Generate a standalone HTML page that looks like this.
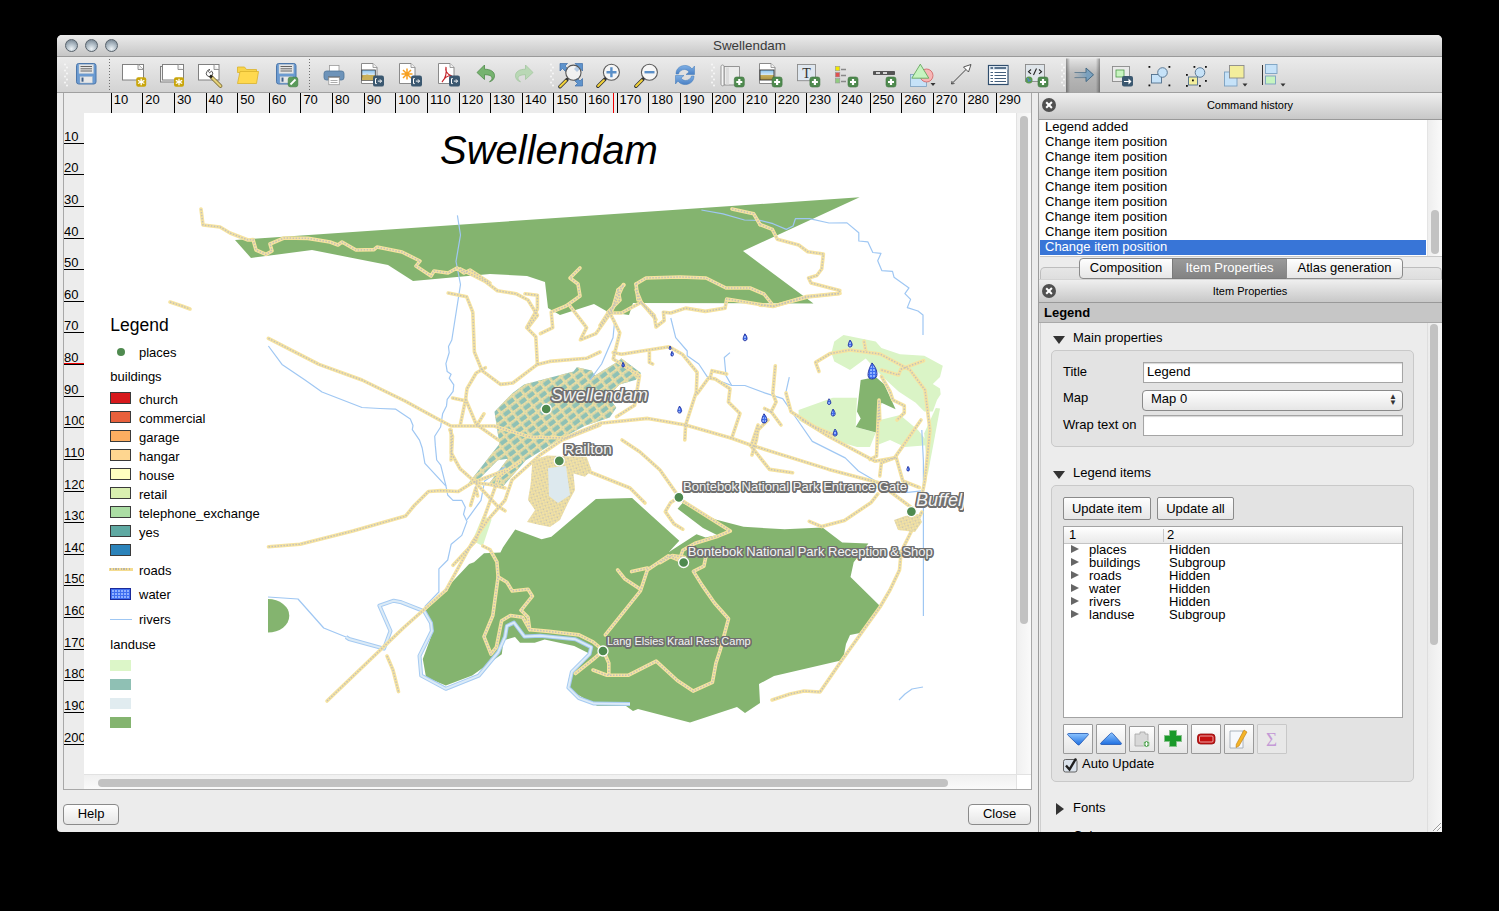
<!DOCTYPE html>
<html><head><meta charset="utf-8">
<style>
*{margin:0;padding:0;box-sizing:border-box}
html,body{width:1499px;height:911px;background:#000;overflow:hidden;font-family:"Liberation Sans",sans-serif;color:#000;position:relative}
.a{position:absolute}
#win{left:57px;top:35px;width:1385px;height:797px;background:#ececec;border-radius:5px 5px 4px 4px}
#title{left:57px;top:35px;width:1385px;height:22px;background:linear-gradient(#ebebeb,#c6c6c6);border-radius:5px 5px 0 0;border-bottom:1px solid #9a9a9a}
#title .t{left:0;width:100%;top:3px;text-align:center;font-size:13.4px;color:#3a3a3a}
.tl{width:13px;height:13px;border-radius:50%;background:radial-gradient(circle at 50% 80%,#eef3f6 0,#b9c5ce 40%,#8594a0 80%,#6c7984 100%);border:1px solid #58626b}
#tb{left:57px;top:57px;width:1385px;height:36px;background:linear-gradient(#ebebeb,#d3d3d3);border-bottom:1px solid #a0a0a0}
#cframe{left:63px;top:93px;width:969px;height:697px;border:1px solid #a8a8a8;border-top:none;background:#ececec}
#rtop{left:84px;top:93px;width:947px;height:20px;background:#ececec;overflow:hidden;font-size:13px}
.rt{position:absolute;top:0;height:21px;border-left:1px solid #000;padding-left:2px;line-height:13px}
#rleft{left:64px;top:113px;width:20px;height:661px;background:#ececec;overflow:hidden}
.rl{position:absolute;left:0;width:20px;border-bottom:1px solid #000;line-height:13px;font-size:13px;white-space:nowrap;overflow:hidden}
#page{left:84px;top:113px;width:932px;height:661px;background:#fff;overflow:hidden}
#vs{left:1016px;top:113px;width:15px;height:661px;background:linear-gradient(90deg,#f0f0f0,#fafafa);border-left:1px solid #e2e2e2}
.thumbv{left:3px;top:3px;width:8px;height:508px;border-radius:4px;background:#c2c2c2}
#hs{left:84px;top:774px;width:932px;height:15px;background:linear-gradient(#f0f0f0,#fafafa);border-top:1px solid #e2e2e2}
.thumbh{left:14px;top:4px;width:850px;height:8px;border-radius:4px;background:#c2c2c2}
#corner{left:1016px;top:774px;width:15px;height:15px;background:#fff;border-left:1px solid #e2e2e2;border-top:1px solid #e2e2e2}
#divl{left:1038px;top:93px;width:1px;height:739px;background:#9c9c9c}
.btn{background:linear-gradient(#fefefe,#e6e6e6);border:1px solid #8a8a8a;border-radius:4px;text-align:center;font-size:13px}
.dtitle{position:absolute;left:1039px;width:403px;padding-left:19px;background:linear-gradient(#efefef,#c8c8c8);border-bottom:1px solid #999;text-align:center;font-size:11px}
.close{position:absolute;width:14px;height:14px;border-radius:50%;background:#505050}
.close:before,.close:after{content:"";position:absolute;left:6px;top:3px;width:2.4px;height:8px;background:#fff;transform:rotate(45deg)}
.close:after{transform:rotate(-45deg)}
.ch{position:absolute;left:1045px;font-size:13px;height:15px;line-height:15px;white-space:nowrap}
.tri{position:absolute;width:0;height:0;border-left:6px solid transparent;border-right:6px solid transparent;border-top:8px solid #333}
.trir{position:absolute;width:0;height:0;border-top:5px solid transparent;border-bottom:5px solid transparent;border-left:8px solid #333}
.lbl{position:absolute;font-size:13px;white-space:nowrap}
.inp{position:absolute;background:#fff;border:1px solid #a5a5a5;box-shadow:inset 0 1px 1px #d5d5d5;font-size:13px;padding-left:5px;line-height:18px}
.leg{position:absolute;font-size:13px;left:55px;white-space:nowrap}
.sw{position:absolute;left:26px;width:21px;height:12px;border:1px solid #444}
.ml{position:absolute;white-space:nowrap;font-size:12px;color:#f4f4f4;text-shadow:-1.5px 0px 0 #707070,1.5px 0px 0 #707070,0px -1.5px 0 #707070,0px 1.5px 0 #707070,-1px -1px 0 #707070,1px -1px 0 #707070,-1px 1px 0 #707070,1px 1px 0 #707070,-1.5px -0.8px 0 #707070,1.5px 0.8px 0 #707070,-1.5px 0.8px 0 #707070,1.5px -0.8px 0 #707070,0.8px 1.5px 0 #707070,-0.8px 1.5px 0 #707070,0.8px -1.5px 0 #707070,-0.8px -1.5px 0 #707070}
.ib{position:absolute}

</style></head><body>
<div class="a" id="win"></div>
<div class="a" id="title"><div class="t a">Swellendam</div></div>
<div class="tl a" style="left:65px;top:39px"></div><div class="tl a" style="left:85px;top:39px"></div><div class="tl a" style="left:105px;top:39px"></div>
<div class="a" id="tb"></div>
<svg class="a" style="left:0;top:0" width="1499" height="100" viewBox="0 0 1499 100">
<defs>
<linearGradient id="gpress" x1="0" y1="0" x2="0" y2="1"><stop offset="0" stop-color="#b9b9b9"/><stop offset="1" stop-color="#a9a9a9"/></linearGradient>
<linearGradient id="gblue" x1="0" y1="0" x2="0" y2="1"><stop offset="0" stop-color="#7fb0e6"/><stop offset="1" stop-color="#4a80c4"/></linearGradient>
<linearGradient id="gland" x1="0" y1="0" x2="0" y2="1"><stop offset="0" stop-color="#86c3f0"/><stop offset="0.5" stop-color="#d8e9f5"/><stop offset="0.5" stop-color="#c8b060"/><stop offset="1" stop-color="#a89040"/></linearGradient>
<g id="badgeY"><rect x="0" y="0" width="10" height="9.5" rx="2" fill="#c9a50a"/><path d="M5,1.5v6.5M1.8,3.2l6.4,3.1M8.2,3.2l-6.4,3.1" stroke="#fff" stroke-width="1.3"/></g>
<g id="badgeG"><rect x="0" y="0" width="10" height="10" rx="2.2" fill="#4e8a4e" stroke="#3f733f" stroke-width="0.6"/><path d="M5,2v6M2,5h6" stroke="#fff" stroke-width="2.2"/></g>
<g id="badgeE"><rect x="0" y="0" width="11" height="11" rx="2.2" fill="#3b5870"/><path d="M3.8,3h-1.3v5h1.3" stroke="#fff" stroke-width="1" fill="none"/><path d="M4.8,5.5h3.6M7,3.8l1.6,1.7l-1.6,1.7" stroke="#fff" stroke-width="1" fill="none"/></g>
<g id="grip"><circle cx="0" cy="0" r="1" fill="#f7f7f7"/><circle cx="2" cy="3" r="1" fill="#f7f7f7"/><circle cx="0" cy="6" r="1" fill="#f7f7f7"/><circle cx="2" cy="9" r="1" fill="#f7f7f7"/><circle cx="0" cy="12" r="1" fill="#f7f7f7"/><circle cx="2" cy="15" r="1" fill="#f7f7f7"/><circle cx="0" cy="18" r="1" fill="#f7f7f7"/><circle cx="2" cy="21" r="1" fill="#f7f7f7"/></g>
<g id="page"><path d="M0.5,0.5h11.5l4,4v16h-15.5z" fill="#fff" stroke="#8a8a8a" stroke-width="1"/><path d="M12,0.5v4h4" fill="#f0f0f0" stroke="#8a8a8a" stroke-width="0.8"/></g>
</defs>
<use href="#grip" x="65" y="64.5"/>
<use href="#grip" x="551" y="64.5"/>
<use href="#grip" x="712" y="64.5"/>
<use href="#grip" x="1062" y="64.5"/>
<line x1="109.5" y1="59" x2="109.5" y2="90" stroke="#6e6e6e" stroke-width="1" stroke-dasharray="1 2"/>
<line x1="309.5" y1="59" x2="309.5" y2="90" stroke="#6e6e6e" stroke-width="1" stroke-dasharray="1 2"/>
<rect x="76.5" y="63.5" width="19.5" height="20.5" rx="2.2" fill="#6b9bd2" stroke="#4d77aa" stroke-width="1"/><rect x="79" y="64.5" width="14.5" height="9" fill="#e6e6e6" stroke="#b8c5d2" stroke-width="0.5"/><path d="M80.5,66.5h11.5M80.5,68.8h11.5M80.5,71h11.5" stroke="#555" stroke-width="0.9"/><rect x="80" y="76.5" width="12.5" height="6.5" fill="#e8e8e8" stroke="#9fb3c8" stroke-width="0.5"/><rect x="81.5" y="77.5" width="2" height="4.2" fill="#3f5f88"/>
<rect x="122.5" y="64.5" width="21" height="15.5" fill="#fff" stroke="#808080"/><path d="M138,64.5l5.5,5" stroke="#808080" fill="none"/><path d="M138,64.5v5h5.5" fill="#eee" stroke="#808080" stroke-width="0.8"/>
<use href="#badgeY" x="136.2" y="77.2"/>
<rect x="160.5" y="66.5" width="21" height="15.5" fill="#eee" stroke="#808080"/><rect x="162.5" y="64.5" width="21" height="15.5" fill="#fff" stroke="#808080"/><path d="M178,64.5v5h5.5" fill="#eee" stroke="#808080" stroke-width="0.8"/>
<use href="#badgeY" x="174" y="77.2"/>
<rect x="198.5" y="64.5" width="20.5" height="15.5" fill="#fff" stroke="#808080"/><path d="M214,64.5v5h5" fill="#eee" stroke="#808080" stroke-width="0.8"/>
<path d="M207,71.5 a3.2,3.2 0 1 0 4.5,-0.5 l-1.8,1.8 l-1.5,-1.5 l1.8,-1.8 a3.2,3.2 0 0 0 -3,2z" fill="#fff" stroke="#555" stroke-width="1"/>
<path d="M211.5,77l9,9" stroke="#7a6a30" stroke-width="3.8" stroke-linecap="round"/><path d="M211.5,77l9,9" stroke="#e6d27a" stroke-width="2.2" stroke-linecap="round"/><path d="M210,75.5l2,2" stroke="#222" stroke-width="2.6"/>
<path d="M237.5,67h7l2,2.5h10v3h-19z" fill="#f8d44a" stroke="#d9b22c" stroke-width="0.8"/><path d="M237.5,83.5l2.5,-12h18.5l-2,12z" fill="#ffd94e" stroke="#d9b22c" stroke-width="0.8"/>
<rect x="276.5" y="63.5" width="19.5" height="20.5" rx="2.2" fill="#6b9bd2" stroke="#4d77aa" stroke-width="1"/><rect x="279" y="64.5" width="14.5" height="9" fill="#e6e6e6" stroke="#b8c5d2" stroke-width="0.5"/><path d="M280.5,66.5h11.5M280.5,68.8h11.5M280.5,71h11.5" stroke="#555" stroke-width="0.9"/><rect x="280" y="76.5" width="12.5" height="6.5" fill="#e8e8e8" stroke="#9fb3c8" stroke-width="0.5"/><rect x="281.5" y="77.5" width="2" height="4.2" fill="#3f5f88"/>
<rect x="288.2" y="77.2" width="9.6" height="9.6" rx="2" fill="#5a9a5a" stroke="#3d7a3d" stroke-width="0.6"/><path d="M290.5,84.5l5,-5" stroke="#fff" stroke-width="1.8"/>
<rect x="329.5" y="65.5" width="9.5" height="7" fill="#fff" stroke="#999" stroke-width="0.8"/><rect x="324" y="71" width="20" height="9" rx="2.5" fill="#6d93b9" stroke="#4f7398" stroke-width="0.8"/><rect x="328" y="76.5" width="12" height="3" fill="#666"/><rect x="328.8" y="77.5" width="10.5" height="7.2" fill="#fff" stroke="#999" stroke-width="0.8"/><path d="M330.5,80.5h7M330.5,82.5h7" stroke="#888" stroke-width="0.7"/>
<use href="#page" x="361" y="63"/><rect x="361.8" y="70" width="13.5" height="10.2" fill="url(#gland)" stroke="#333" stroke-width="0.8"/><path d="M362,78 q4,-5 7,-3 t6,2 v3h-13z" fill="#c9b05a"/>
<use href="#badgeE" x="373" y="75.6"/>
<use href="#page" x="399" y="63"/><g stroke="#f7a020" stroke-width="1.5"><path d="M407,68.5v11M401.5,74h11M403,70l8,8M411,70l-8,8"/></g><circle cx="407" cy="74" r="2" fill="#f7a020"/>
<use href="#badgeE" x="411" y="75.6"/>
<use href="#page" x="438" y="63"/><path d="M446,67 c-1,3 1,8 6,9 c-4,-1 -8,2 -10,6 c3,-3 5,-8 4,-15z" fill="none" stroke="#c4242a" stroke-width="1.1"/>
<use href="#badgeE" x="449" y="75.6"/>
<path d="M477,72.5l7.5,-7.5v4.2c6,0 10,2.5 10,6.5c0,3.5 -2.5,5.5 -5,6c2,-1 2.5,-2.5 2.5,-3.5c0,-2.5 -3,-3.5 -7.5,-3.5v4.8z" fill="#76b36f" stroke="#4f8a4a" stroke-width="0.8"/>
<path d="M533,72.5l-7.5,-7.5v4.2c-6,0 -10,2.5 -10,6.5c0,3.5 2.5,5.5 5,6c-2,-1 -2.5,-2.5 -2.5,-3.5c0,-2.5 3,-3.5 7.5,-3.5v4.8z" fill="#b9d8b5" stroke="#a3c6a0" stroke-width="0.8"/>
<path d="M560,63.5h7.5l-2.5,2.5 3,3 -2.5,2.5 -3,-3 -2.5,2.5z M582.5,63.5v7.5l-2.5,-2.5 -3,3 -2.5,-2.5 3,-3 -2.5,-2.5z M582.5,86v-7.5l-2.5,2.5 -3,-3 -2.5,2.5 3,3 -2.5,2.5z" fill="#5e93cc" stroke="#3f6fa8" stroke-width="0.7"/>
<circle cx="573.4" cy="72.7" r="7.6" fill="#fff" fill-opacity="0.55" stroke="#555" stroke-width="1.1"/>
<path d="M566.9,79.7l-7,7" stroke="#333" stroke-width="3.6" stroke-linecap="round"/><path d="M565.9,80.7l-5.8,5.8" stroke="#f2d23a" stroke-width="2" stroke-linecap="round"/>
<circle cx="611.4" cy="72.2" r="8" fill="#f6f6f6" stroke="#5a5a5a" stroke-width="1.1"/><path d="M606.5,72.2h10M611.4,67.2v10" stroke="#5a8fc8" stroke-width="2.4"/>
<path d="M604.9,79.2l-7,7" stroke="#333" stroke-width="3.6" stroke-linecap="round"/><path d="M603.9,80.2l-5.8,5.8" stroke="#f2d23a" stroke-width="2" stroke-linecap="round"/>
<circle cx="649.4" cy="72.2" r="8" fill="#f6f6f6" stroke="#5a5a5a" stroke-width="1.1"/><path d="M644.5,72.2h10" stroke="#5a8fc8" stroke-width="2.4"/>
<path d="M642.9,79.2l-7,7" stroke="#333" stroke-width="3.6" stroke-linecap="round"/><path d="M641.9,80.2l-5.8,5.8" stroke="#f2d23a" stroke-width="2" stroke-linecap="round"/>
<path d="M676,74 c0,-6 5,-9 10,-8.5 c3,0.3 5,2 6,3.5 l2.5,-3 v8.5h-8.5l3,-2.5c-1,-1.5 -2.5,-2.5 -4.5,-2.5c-3,0 -5.5,2 -6,4.5z" fill="url(#gblue)" stroke="#3f78b8" stroke-width="0.5"/>
<path d="M694,76 c0,6 -5,9 -10,8.5 c-3,-0.3 -5,-2 -6,-3.5 l-2.5,3 v-8.5h8.5l-3,2.5c1,1.5 2.5,2.5 4.5,2.5c3,0 5.5,-2 6,-4.5z" fill="url(#gblue)" stroke="#3f78b8" stroke-width="0.5"/>
<path d="M724,66.5h15.5v18.5h-15.5z" fill="#ececec" stroke="#8a8a8a" stroke-width="0.9"/><path d="M721,66.5c0,-2 3,-2 3,0v18.5c0,1 -3,1.5 -3,-1z" fill="#f6f6f6" stroke="#8a8a8a" stroke-width="0.9"/><rect x="726" y="67.5" width="3" height="17" fill="#dcdcdc"/>
<use href="#badgeG" x="734.3" y="77"/>
<use href="#page" x="759" y="63"/><rect x="760" y="70" width="14" height="10" fill="url(#gland)" stroke="#333" stroke-width="0.9"/>
<use href="#badgeG" x="772.1" y="77"/>
<rect x="797.5" y="64.5" width="18" height="16.2" fill="#dfe7ef" stroke="#8a8a8a" stroke-width="0.9"/><text x="806.5" y="77.5" font-family="Liberation Serif" font-size="14" text-anchor="middle" fill="#333">T</text>
<use href="#badgeG" x="809.9" y="77"/>
<rect x="835.3" y="66.3" width="4.5" height="4.5" fill="#f2e800" stroke="#999" stroke-width="0.6"/><rect x="835.3" y="72.5" width="4.5" height="4.5" fill="#e05050" stroke="#999" stroke-width="0.6"/><rect x="835.3" y="78.5" width="4.5" height="4.5" fill="#90cc80" stroke="#999" stroke-width="0.6"/><path d="M841,69.5h5M841,75.5h5M841,81.5h5" stroke="#888" stroke-width="1.4"/>
<use href="#badgeG" x="848" y="77"/>
<rect x="873" y="71" width="22" height="4" rx="0.8" fill="#555"/><path d="M876,73h4M883,73h4" stroke="#fff" stroke-width="1.4"/>
<use href="#badgeG" x="886" y="77"/>
<rect x="910.5" y="74.5" width="16" height="12" fill="#c6e2f8" stroke="#7aa0c0" stroke-width="0.8"/><circle cx="926.5" cy="75.5" r="6.5" fill="#f7b6b6" stroke="#d06060" stroke-width="0.8"/><path d="M920.3,64.2l8.5,14h-17z" fill="#c6f4c0" stroke="#58a050" stroke-width="0.8"/><path d="M930.5,83h5l-2.5,3z" fill="#333"/>
<path d="M951.5,84l19,-19" stroke="#444" stroke-width="1"/><path d="M971,64.5l-7.5,2.5l5,5z" fill="#fff" stroke="#444" stroke-width="0.9"/><path d="M951.5,84l0.5,-3M951.5,84l3,-0.5" stroke="#444" stroke-width="0.9"/>
<rect x="988.5" y="65.5" width="19.5" height="19" fill="#fff" stroke="#2f4d6d" stroke-width="1.2"/><rect x="989" y="66" width="18.5" height="3.8" fill="#dbe5ef"/><path d="M990.5,68h2.5M994.5,68h11.5" stroke="#2f4d6d" stroke-width="1.3"/><path d="M990.5,72.5h2.5M994.5,72.5h11.5M990.5,75.5h2.5M994.5,75.5h11.5M990.5,78.5h2.5M994.5,78.5h11.5M990.5,81.5h2.5M994.5,81.5h11.5" stroke="#2f4d6d" stroke-width="0.9"/>
<rect x="1025.5" y="64.5" width="19" height="17" fill="#dfe5ea" stroke="#888" stroke-width="0.9"/><path d="M1031,69.5l-2.5,2.2l2.5,2.2M1039,69.5l2.5,2.2l-2.5,2.2M1036.5,68.5l-3,6.5" stroke="#222" stroke-width="1.1" fill="none"/><circle cx="1029" cy="80" r="3.5" fill="#5a9a50"/><path d="M1027,78.5c1,0 2,1 1.5,2.5c1,0 1.5,-1 2.5,-0.5" stroke="#4f86c0" stroke-width="1.3" fill="none"/>
<use href="#badgeG" x="1038" y="77"/>
<defs><linearGradient id="gpr2" x1="0" y1="0" x2="0" y2="1"><stop offset="0" stop-color="#e4e4e4"/><stop offset="0.45" stop-color="#b8b8b8"/><stop offset="1" stop-color="#a9a9a9"/></linearGradient><linearGradient id="gside" x1="0" y1="0" x2="1" y2="0"><stop offset="0" stop-color="#000" stop-opacity="0.35"/><stop offset="0.12" stop-color="#000" stop-opacity="0"/><stop offset="0.88" stop-color="#000" stop-opacity="0"/><stop offset="1" stop-color="#000" stop-opacity="0.35"/></linearGradient><linearGradient id="gstem" x1="0" y1="0" x2="1" y2="0"><stop offset="0" stop-color="#7aa0bd" stop-opacity="0"/><stop offset="0.7" stop-color="#7aa0bd"/></linearGradient></defs>
<rect x="1066" y="58.5" width="34" height="34" fill="url(#gpr2)"/><rect x="1066" y="58.5" width="34" height="34" fill="url(#gside)"/>
<path d="M1074.5,72.5h11.5v-4.5l7.5,6.8l-7.5,6.8v-4.5h-11.5z" fill="url(#gstem)"/><path d="M1086,72.5v-4.5l7.5,6.8l-7.5,6.8v-4.5" fill="#7aa0bd" stroke="#3f6580" stroke-width="0.9"/><path d="M1074.5,72.5h11.5M1074.5,77.6h11.5" stroke="#3f6580" stroke-width="0.8" opacity="0.8"/>
<rect x="1112.5" y="66.5" width="17" height="15" fill="#eaeaea" stroke="#8a8a8a" stroke-width="0.9"/><rect x="1116" y="70" width="8" height="7" fill="#c8f4c0" stroke="#4f9a4a" stroke-width="0.8"/><rect x="1122" y="76" width="11" height="10.5" rx="2" fill="#3b5870"/><path d="M1124,81h4.5v-2.5l3,3l-3,3v-2.5h-4.5z" fill="#fff"/>
<rect x="1151.5" y="74.5" width="10" height="8.5" fill="#c6e2f8" stroke="#506f8c" stroke-width="0.9"/><circle cx="1162.5" cy="72.5" r="4.8" fill="#c6e2f8" stroke="#506f8c" stroke-width="0.9"/>
<rect x="1148.5" y="66" width="1.8" height="1.8" fill="#111"/>
<rect x="1168.5" y="66" width="1.8" height="1.8" fill="#111"/>
<rect x="1148.5" y="84.5" width="1.8" height="1.8" fill="#111"/>
<rect x="1168.5" y="84.5" width="1.8" height="1.8" fill="#111"/>
<rect x="1188.5" y="77" width="9" height="8" fill="#f3ee9c" stroke="#506f8c" stroke-width="0.9"/><circle cx="1200" cy="72.5" r="4.8" fill="#c6e2f8" stroke="#506f8c" stroke-width="0.9"/>
<rect x="1186" y="74" width="1.8" height="1.8" fill="#111"/>
<rect x="1193.5" y="66" width="1.8" height="1.8" fill="#111"/>
<rect x="1205" y="66" width="1.8" height="1.8" fill="#111"/>
<rect x="1186" y="85" width="1.8" height="1.8" fill="#111"/>
<rect x="1199" y="85" width="1.8" height="1.8" fill="#111"/>
<rect x="1205" y="80" width="1.8" height="1.8" fill="#111"/>
<rect x="1192" y="79.5" width="1.8" height="1.8" fill="#111"/>
<rect x="1224.5" y="72" width="12.5" height="14" fill="#c6e2f8" stroke="#7aa0c0" stroke-width="0.9"/><rect x="1229.5" y="65.5" width="14.5" height="12.5" fill="#f3ee9c" stroke="#8a8a8a" stroke-width="0.9"/><path d="M1242.5,83.5h5l-2.5,3z" fill="#333"/>
<path d="M1262.5,65v20" stroke="#333" stroke-width="1"/><rect x="1265.5" y="64.5" width="11.5" height="9" fill="#c6e2f8" stroke="#7aa0c0" stroke-width="0.9"/><rect x="1265.5" y="76" width="10" height="8" fill="#c6f4c0" stroke="#7aa0c0" stroke-width="0.9"/><path d="M1280.5,83.5h5l-2.5,3z" fill="#333"/>
</svg>
<!-- canvas -->
<div class="a" id="cframe"></div>
<div class="a" id="rtop"><div class="rt" style="left:26.7px">10</div>
<div class="rt" style="left:58.3px">20</div>
<div class="rt" style="left:89.9px">30</div>
<div class="rt" style="left:121.6px">40</div>
<div class="rt" style="left:153.2px">50</div>
<div class="rt" style="left:184.8px">60</div>
<div class="rt" style="left:216.4px">70</div>
<div class="rt" style="left:248.0px">80</div>
<div class="rt" style="left:279.7px">90</div>
<div class="rt" style="left:311.3px">100</div>
<div class="rt" style="left:342.9px">110</div>
<div class="rt" style="left:374.5px">120</div>
<div class="rt" style="left:406.1px">130</div>
<div class="rt" style="left:437.8px">140</div>
<div class="rt" style="left:469.4px">150</div>
<div class="rt" style="left:501.0px">160</div>
<div class="rt" style="left:532.6px">170</div>
<div class="rt" style="left:564.2px">180</div>
<div class="rt" style="left:595.9px">190</div>
<div class="rt" style="left:627.5px">200</div>
<div class="rt" style="left:659.1px">210</div>
<div class="rt" style="left:690.7px">220</div>
<div class="rt" style="left:722.3px">230</div>
<div class="rt" style="left:754.0px">240</div>
<div class="rt" style="left:785.6px">250</div>
<div class="rt" style="left:817.2px">260</div>
<div class="rt" style="left:848.8px">270</div>
<div class="rt" style="left:880.4px">280</div>
<div class="rt" style="left:912.1px">290</div></div>
<div class="a" id="rleft"><div class="rl" style="top:16.7px">10</div>
<div class="rl" style="top:48.3px">20</div>
<div class="rl" style="top:79.9px">30</div>
<div class="rl" style="top:111.6px">40</div>
<div class="rl" style="top:143.2px">50</div>
<div class="rl" style="top:174.8px">60</div>
<div class="rl" style="top:206.4px">70</div>
<div class="rl" style="top:238.0px">80</div>
<div class="rl" style="top:269.7px">90</div>
<div class="rl" style="top:301.3px">100</div>
<div class="rl" style="top:332.9px">110</div>
<div class="rl" style="top:364.5px">120</div>
<div class="rl" style="top:396.1px">130</div>
<div class="rl" style="top:427.8px">140</div>
<div class="rl" style="top:459.4px">150</div>
<div class="rl" style="top:491.0px">160</div>
<div class="rl" style="top:522.6px">170</div>
<div class="rl" style="top:554.2px">180</div>
<div class="rl" style="top:585.9px">190</div>
<div class="rl" style="top:617.5px">200</div></div>
<div class="a" id="page"><svg class="a" style="left:-84px;top:-113px" width="1499" height="911" viewBox="0 0 1499 911">
<defs><clipPath id="mc"><rect x="84" y="190" width="880" height="545"/></clipPath><pattern id="tp" width="10" height="7" patternUnits="userSpaceOnUse" patternTransform="rotate(-37)"><rect width="10" height="7" fill="none"/><rect x="0" y="0" width="10" height="2.6" fill="#f6e3a0"/><rect x="0" y="0" width="2.6" height="7" fill="#f6e3a0"/><rect x="0.8" y="0.8" width="1" height="1" fill="#c4c2ba"/><rect x="3.8" y="0.8" width="1" height="1" fill="#c4c2ba"/><rect x="6.8" y="0.8" width="1" height="1" fill="#c4c2ba"/><rect x="0.8" y="3.8" width="1" height="1" fill="#c4c2ba"/></pattern><pattern id="rp" width="4" height="4" patternUnits="userSpaceOnUse" patternTransform="rotate(30)"><rect width="4" height="4" fill="#f3e2a2"/><rect x="0.5" y="0.5" width="1.4" height="1.4" fill="#bdbdb5"/><rect x="2.5" y="2.3" width="1.2" height="1.2" fill="#c9c7be"/></pattern><clipPath id="hc"><rect x="268" y="590" width="30" height="50"/></clipPath><pattern id="wp" width="3" height="3" patternUnits="userSpaceOnUse"><rect width="3" height="3" fill="#3f6ef0"/><rect width="2" height="2" fill="#8fb0ff"/></pattern></defs>
<g clip-path="url(#mc)">
<polygon points="834.3,341.4 843.5,335 875.7,341.4 881.4,347.9 900,354.3 924.3,355.7 942.8,365.7 940,377 932.8,384 940,388.6 940.7,394.3 937,400 932.8,411.4 924.3,411.4 915.7,402.8 898.6,391.4 882.8,377 865.7,358.5 850,370 834.3,361.4 831.4,352.9" fill="#daf4c6"/><polygon points="798.6,410 832.8,397.8 857,397.8 855.7,427 875.7,432.8 870,447 857,447 832.8,440 818.6,431.4 798.6,420" fill="#daf4c6"/><polygon points="880,420 900,415 918,430 930,445 905,447 890,440 878,444.7" fill="#daf4c6"/><polygon points="935.8,408 940,408.5 927.5,476 924.2,433.2" fill="#daf4c6"/><polygon points="472.3,540.7 482.8,516.1 491.6,519.6 482.8,546" fill="#daf4c6"/>
<polygon points="235,240 251,258 312,250 388,265 413,281 490,274 527,276 545,282 548,308 560,315 594,304 608,312 629,315 633,303 813.5,303.5 743,251 859.6,197.3" fill="#84b46f"/><polygon points="424.4,611.4 469.1,564 474,562.3 484,553.3 500.4,552.4 502.9,547.5 515.2,529.4 541.6,539.3 551.4,536.8 595.9,498.9 632.1,498.1 679.3,540.8 668.6,552.3 696.5,534.2 705.6,537.5 717,535 703,528 677.6,508.7 682.6,503 715.5,519.4 743.5,526.8 784.6,529.3 822.5,527.6 842.2,542.4 868.4,543.5 853.7,562.2 850.5,577 880,606 860,633 850,635 846,644 843,660 774,676 759,684 760,703 745,713 737,707 690,722.4 638,709 633,711 626,706 597.3,706 567.6,688.8 569.3,675.6 590.7,654.2 574.2,646 544.6,639.4 534.7,642.7 520,642.7 515,637 503.5,640.2 501.8,654.2 472.2,675.6 445.8,685.5 426,677.2 422.8,659 433.5,630.3" fill="#84b46f"/><polygon points="860.7,380 875.7,377 884.2,384.3 895.6,409.2 881.4,402.8 877,432.8 855.7,427 860.7,418.5 857,411.4" fill="#84b46f"/>
<ellipse cx="268" cy="615.8" rx="21.3" ry="16.8" fill="#84b46f" clip-path="url(#hc)"/>
<polygon points="465.7,486.7 499.4,443.9 494.5,411.8 512.6,392.9 524.1,384.6 573.5,371.5 576.8,367.3 591.6,370.6 594.9,375.6 618,361.6 621.3,358.3 641,373.1 636,379.7 619.6,384.6 608.1,396.2 616.3,407.7 609.7,417.6 585,425.8 560.4,439 525.8,460.3 502.7,486.7 487.9,485 507.7,458.7 497.8,460.3 479.7,478.5 473.1,483.4" fill="#8fc1b5"/><polygon points="465.7,486.7 499.4,443.9 494.5,411.8 512.6,392.9 524.1,384.6 573.5,371.5 576.8,367.3 591.6,370.6 594.9,375.6 618,361.6 621.3,358.3 641,373.1 636,379.7 619.6,384.6 608.1,396.2 616.3,407.7 609.7,417.6 585,425.8 560.4,439 525.8,460.3 502.7,486.7 487.9,485 507.7,458.7 497.8,460.3 479.7,478.5 473.1,483.4" fill="url(#tp)" opacity="0.9"/>
<polyline points="457.4,215.4 460.5,235 456,261.5 460.5,284.5 451.8,340 448.5,346.6 449.2,352.5 445.9,363.7 447.2,371.6 451.1,374.3 449.2,378.2 453.8,384.8 453.1,391.4 447.2,399.3 446.5,405.9 442.6,413.8 440.6,427 434.7,436.2 435.3,445.4 436.7,460 440.7,465.1 446,486.2" fill="none" stroke="#9fc7f3" stroke-width="1.2" stroke-linejoin="round"/>
<polyline points="760,220.4 773,223.7 786.3,229.4 793,226 795.4,218.7 809.4,218.7 829,223 847,222.9 858.8,232.7 858.8,241 867.8,241.8 872.8,252.5 881,253.3 877.7,260.7 881.8,270.6 892.5,271.4 894,277.2 909,287.9 904.9,293.6 910.6,299.4 907.3,307.6 918,311 923,315 923,335" fill="none" stroke="#9fc7f3" stroke-width="1.2" stroke-linejoin="round"/>
<polyline points="701.4,210 723,213.8 744.5,220 760,220.4" fill="none" stroke="#9fc7f3" stroke-width="1.2" stroke-linejoin="round"/>
<polyline points="670.8,318 675.7,337.7 687.2,351 687.2,355.8 698.8,364 707,376.4 731.7,385.5 744.9,385.5 764.6,392.9 782.7,398.6 797.5,420 812.3,441.4 845.2,457.9 858.4,471 878.1,482.6 907.8,492.4 921.8,490.8" fill="none" stroke="#9fc7f3" stroke-width="1.2" stroke-linejoin="round"/>
<polyline points="730,352.6 724.3,357.5 726,375.6 731.7,385.5" fill="none" stroke="#9fc7f3" stroke-width="1.2" stroke-linejoin="round"/>
<polyline points="789.3,377.2 785.2,395.3" fill="none" stroke="#9fc7f3" stroke-width="1.2" stroke-linejoin="round"/>
<polyline points="614.8,319.6 613,337.7 606.6,352.6 601.6,364 590,380" fill="none" stroke="#9fc7f3" stroke-width="1.2" stroke-linejoin="round"/>
<polyline points="921.8,430 923.4,461 923.4,616" fill="none" stroke="#9fc7f3" stroke-width="1.2" stroke-linejoin="round"/>
<polyline points="268,597 298,599 323.7,628 346,637" fill="none" stroke="#9fc7f3" stroke-width="1.2" stroke-linejoin="round"/>
<polyline points="346,637 349,639 384,648.6 390.5,631 379.4,605.6 393.7,600.7 401.4,602.3 424.4,611.4 431,623 431.9,631 419.5,655.8 421.2,675.6 445.8,688.8 478.8,675.6 498.1,652.4 505.1,636.6 506.9,626 514,622.6 524.5,636.6 540.3,635.7 575.4,639.3 591.2,647.2 589.5,654.2 571.9,671.8 568.4,687.6 578.9,698.1 594,703.6 630,704" fill="none" stroke="#9fc7f3" stroke-width="1.2" stroke-linejoin="round"/>
<polyline points="268.4,346 282,364.4 305,380 322,392 362,407.5 380,408.5 395.8,409.2 410.3,419 413,425.6 412.3,429.6 419.5,440.1 422.2,448 424.9,463.4 446,486.2" fill="none" stroke="#9fc7f3" stroke-width="1.2" stroke-linejoin="round"/>
<polyline points="446,486.2 447.7,495 453,500.3 461.8,500.3 465.3,507.3 463.5,514.3 467,521.4 461.8,535.4 451.2,544.2 447.7,560 438.9,568.8 438.9,592 424.7,606.7" fill="none" stroke="#9fc7f3" stroke-width="1.2" stroke-linejoin="round"/>
<polyline points="467,519.6 481,500.3 484.6,481 505,466.9" fill="none" stroke="#9fc7f3" stroke-width="1.2" stroke-linejoin="round"/>
<polyline points="899,700 905,694 912,689 923,687" fill="none" stroke="#9fc7f3" stroke-width="1.2" stroke-linejoin="round"/>
<polyline points="346,637 349,639 384,648.6 390.5,631 379.4,605.6 393.7,600.7 401.4,602.3 424.4,611.4 431,623 431.9,631 419.5,655.8 421.2,675.6 445.8,688.8 478.8,675.6 498.1,652.4 505.1,636.6 506.9,626 514,622.6 524.5,636.6 540.3,635.7 575.4,639.3 591.2,647.2 589.5,654.2 571.9,671.8 568.4,687.6 578.9,698.1 594,703.6 630,704" fill="none" stroke="#a6cbf2" stroke-width="4" stroke-linejoin="round"/>
<polyline points="346,637 349,639 384,648.6 390.5,631 379.4,605.6 393.7,600.7 401.4,602.3 424.4,611.4 431,623 431.9,631 419.5,655.8 421.2,675.6 445.8,688.8 478.8,675.6 498.1,652.4 505.1,636.6 506.9,626 514,622.6 524.5,636.6 540.3,635.7 575.4,639.3 591.2,647.2 589.5,654.2 571.9,671.8 568.4,687.6 578.9,698.1 594,703.6 630,704" fill="none" stroke="#dcebf7" stroke-width="2" stroke-linejoin="round"/>
<polyline points="201,209 203,225 220,227 230,233 248,240 253,239.6 256,250 266,254.4 272,251 270,244 284,238 308,238.4 330,242 338,245 342,242 356,250 374,249.6 377,247 402,252 416,259 420,261 416,266 431,276 434,271 448,273 457,268 464,273 470,270 490,283" fill="none" stroke="#f6e3a0" stroke-width="3.6" stroke-linejoin="round" stroke-linecap="round"/>
<polyline points="460.5,269 485,281.4 497.4,290.7 515.9,293.7 528,300 537.4,315.3 528,327.6" fill="none" stroke="#f6e3a0" stroke-width="3.6" stroke-linejoin="round" stroke-linecap="round"/>
<polyline points="525,293.7 537.4,295.3 537.4,309 526.6,327.6 535.8,336.8 537.4,364.4" fill="none" stroke="#f6e3a0" stroke-width="3.6" stroke-linejoin="round" stroke-linecap="round"/>
<polyline points="580,268 570,278 578,284 580,296 566,306 551.2,312.2 552.7,327.6 540.4,333.7" fill="none" stroke="#f6e3a0" stroke-width="3.6" stroke-linejoin="round" stroke-linecap="round"/>
<polyline points="636,284 646,278 680,277 706,278 726,288 750,288 764,294 772,304" fill="none" stroke="#f6e3a0" stroke-width="3.6" stroke-linejoin="round" stroke-linecap="round"/>
<polyline points="638,300 636,284" fill="none" stroke="#f6e3a0" stroke-width="3.6" stroke-linejoin="round" stroke-linecap="round"/>
<polyline points="608,312 620,300 618,290 624,285" fill="none" stroke="#f6e3a0" stroke-width="3.6" stroke-linejoin="round" stroke-linecap="round"/>
<polyline points="170,302 182,306 190,309" fill="none" stroke="#f6e3a0" stroke-width="3.6" stroke-linejoin="round" stroke-linecap="round"/>
<polyline points="570,306 586.6,327.6 580.4,339.8 595.8,333.7 611,312.2 623.4,284.5" fill="none" stroke="#f6e3a0" stroke-width="3.6" stroke-linejoin="round" stroke-linecap="round"/>
<polyline points="448.2,293 466.7,296.8 472.8,312.2 474.4,352 482,370.6 500.5,384.4 512.8,383 537.4,364.4 549.7,361.4 586.6,358.3 600,352" fill="none" stroke="#f6e3a0" stroke-width="3.6" stroke-linejoin="round" stroke-linecap="round"/>
<polyline points="449.8,429.6 452.5,436.2 451.1,460" fill="none" stroke="#f6e3a0" stroke-width="3.6" stroke-linejoin="round" stroke-linecap="round"/>
<polyline points="485.4,367.7 476.2,373 467,388.7 465.6,399.3 460.4,424.3" fill="none" stroke="#f6e3a0" stroke-width="3.6" stroke-linejoin="round" stroke-linecap="round"/>
<polyline points="465.6,399.3 476.2,424.3 498.6,440.1" fill="none" stroke="#f6e3a0" stroke-width="3.6" stroke-linejoin="round" stroke-linecap="round"/>
<polyline points="452.5,398 464.3,400.6" fill="none" stroke="#f6e3a0" stroke-width="3.6" stroke-linejoin="round" stroke-linecap="round"/>
<polyline points="477.5,424.3 484,413.8" fill="none" stroke="#f6e3a0" stroke-width="3.6" stroke-linejoin="round" stroke-linecap="round"/>
<polyline points="760,224.5 772.3,229.4 777.3,239.3 798.7,245 807.7,251.7 823.4,254 821.7,269 816.8,275.5 808.6,278 811,283 839.8,290.4 839,293.6 807.7,297 774,306 760,305.2" fill="none" stroke="#f6e3a0" stroke-width="3.6" stroke-linejoin="round" stroke-linecap="round"/>
<polyline points="732,209 753.7,213.8 760,224.5" fill="none" stroke="#f6e3a0" stroke-width="3.6" stroke-linejoin="round" stroke-linecap="round"/>
<polyline points="600,325.4 608,313 621.4,313 641,302.3 654.3,315.5 656,327 664.2,320.5 663.4,312.2 670.8,313 685.6,308.1 705.3,311.4 725.1,308.1 726.7,299 772.8,306.5 805.8,296.6 840,293.3" fill="none" stroke="#f6e3a0" stroke-width="3.6" stroke-linejoin="round" stroke-linecap="round"/>
<polyline points="636.2,290 641.2,302.3 656,319.6" fill="none" stroke="#f6e3a0" stroke-width="3.6" stroke-linejoin="round" stroke-linecap="round"/>
<polyline points="618,290 613.2,306.5 609.9,313 619.8,332.8 613.2,359 639.5,375.6 634.6,405.2 616.5,416.7" fill="none" stroke="#f6e3a0" stroke-width="3.6" stroke-linejoin="round" stroke-linecap="round"/>
<polyline points="613.2,352.6 621.4,354.2 669.1,346.8 682.3,354.2 697.1,372.3 696.3,392 685.6,425 684.8,440" fill="none" stroke="#f6e3a0" stroke-width="3.6" stroke-linejoin="round" stroke-linecap="round"/>
<polyline points="649.4,352.6 649.4,362.4 652.7,364" fill="none" stroke="#f6e3a0" stroke-width="3.6" stroke-linejoin="round" stroke-linecap="round"/>
<polyline points="268.4,338.3 319,364.4 362,380 405,401 436,418 451,426 494,426 530,437 565,438 600,423.3 647.7,418.4 685.6,425 731.7,438.2 749.8,444.7 828.8,469.4 878.1,482.6 911,507.2" fill="none" stroke="#f6e3a0" stroke-width="3.6" stroke-linejoin="round" stroke-linecap="round"/>
<polyline points="697.1,393.7 708.6,378 715.2,378.9 730,388.8 728.4,402 740,413.5 731.7,438.2" fill="none" stroke="#f6e3a0" stroke-width="3.6" stroke-linejoin="round" stroke-linecap="round"/>
<polyline points="710.3,377.2 712,370.7 726.7,374" fill="none" stroke="#f6e3a0" stroke-width="3.6" stroke-linejoin="round" stroke-linecap="round"/>
<polyline points="775.3,365.7 772.8,393.7 776.1,402 771.2,411.8 764.6,408.5" fill="none" stroke="#f6e3a0" stroke-width="3.6" stroke-linejoin="round" stroke-linecap="round"/>
<polyline points="771.2,411.8 781,425" fill="none" stroke="#f6e3a0" stroke-width="3.6" stroke-linejoin="round" stroke-linecap="round"/>
<polyline points="768,420 758,430 756.4,440 752,455" fill="none" stroke="#f6e3a0" stroke-width="3.6" stroke-linejoin="round" stroke-linecap="round"/>
<polyline points="786,392.9 791,411.8 814,426.6 833.7,434.9" fill="none" stroke="#f6e3a0" stroke-width="3.6" stroke-linejoin="round" stroke-linecap="round"/>
<polyline points="819,371.5 815.6,362.4 830.5,353.4 850,350 880,354 910,370 925,390 930,430 925,480 921,500" fill="none" stroke="#f6e3a0" stroke-width="3.6" stroke-linejoin="round" stroke-linecap="round"/>
<polyline points="921,420 894.6,457.9 881.4,462.8 879.8,476" fill="none" stroke="#f6e3a0" stroke-width="3.6" stroke-linejoin="round" stroke-linecap="round"/>
<polyline points="864,341.4 865.7,350.7" fill="none" stroke="#f6e3a0" stroke-width="3.6" stroke-linejoin="round" stroke-linecap="round"/>
<polyline points="881.4,370 898.6,375 900.7,369.3 923.6,360.7" fill="none" stroke="#f6e3a0" stroke-width="3.6" stroke-linejoin="round" stroke-linecap="round"/>
<polyline points="881.4,376.4 890,391.4 892.9,400 904.3,405.7 904.3,412.9 897,420" fill="none" stroke="#f6e3a0" stroke-width="3.6" stroke-linejoin="round" stroke-linecap="round"/>
<polyline points="879.8,420 879,400 876.5,456.2 870,459.5" fill="none" stroke="#f6e3a0" stroke-width="3.6" stroke-linejoin="round" stroke-linecap="round"/>
<polyline points="802.4,420 828.8,436.5 874.9,461.2 894.6,457.9" fill="none" stroke="#f6e3a0" stroke-width="3.6" stroke-linejoin="round" stroke-linecap="round"/>
<polyline points="921.8,512.2 911,532 901.2,551.7 899.5,570 890,590 880,607 842,660 820,692 804,691 790,694 772,700" fill="none" stroke="#f6e3a0" stroke-width="3.6" stroke-linejoin="round" stroke-linecap="round"/>
<polyline points="896.3,457.9 902.8,480.9 919.3,487.5" fill="none" stroke="#f6e3a0" stroke-width="3.6" stroke-linejoin="round" stroke-linecap="round"/>
<polyline points="749.8,444.7 769.5,469.4 792.6,472.7" fill="none" stroke="#f6e3a0" stroke-width="3.6" stroke-linejoin="round" stroke-linecap="round"/>
<polyline points="758,425 751.4,444.7" fill="none" stroke="#f6e3a0" stroke-width="3.6" stroke-linejoin="round" stroke-linecap="round"/>
<polyline points="268.5,546.8 300.1,544.2 352.8,531 405.5,516.1 414.3,505.5 428.4,491.5 440.7,490.6 458.3,491.5 472.3,482.7 505,470.4" fill="none" stroke="#f6e3a0" stroke-width="3.6" stroke-linejoin="round" stroke-linecap="round"/>
<polyline points="451.2,430 451.2,452.8 460,468.7 474,481 496.9,505.5 505,510.8" fill="none" stroke="#f6e3a0" stroke-width="3.6" stroke-linejoin="round" stroke-linecap="round"/>
<polyline points="475.8,482.7 489.9,484.5 505,488" fill="none" stroke="#f6e3a0" stroke-width="3.6" stroke-linejoin="round" stroke-linecap="round"/>
<polyline points="470.6,505.5 475.8,488 477.6,495.9" fill="none" stroke="#f6e3a0" stroke-width="3.6" stroke-linejoin="round" stroke-linecap="round"/>
<polyline points="482.8,546 489.9,549.5 496.9,561.8 498.1,576.9 492.8,615.5 484,636.6 491,654.2 496.4,647.2 501.6,620.8 510.4,615.5 522.7,617.3 529.7,629.6 549,631.4 579,634.9 593,641.9 603.5,650.7" fill="none" stroke="#f6e3a0" stroke-width="3.6" stroke-linejoin="round" stroke-linecap="round"/>
<polyline points="498.1,576.9 506.9,582.2 512.2,591 528,589.2 532.4,596.2 521,610.3 528,617.3 529.7,629.6" fill="none" stroke="#f6e3a0" stroke-width="3.6" stroke-linejoin="round" stroke-linecap="round"/>
<polyline points="605.3,634.9 640.4,591 647.4,569.9 668.5,555.8 683.5,562" fill="none" stroke="#f6e3a0" stroke-width="3.6" stroke-linejoin="round" stroke-linecap="round"/>
<polyline points="617.6,569.9 624.6,578.7 640.4,589.2" fill="none" stroke="#f6e3a0" stroke-width="3.6" stroke-linejoin="round" stroke-linecap="round"/>
<polyline points="631.6,571.6 647.4,568.1" fill="none" stroke="#f6e3a0" stroke-width="3.6" stroke-linejoin="round" stroke-linecap="round"/>
<polyline points="593,670 607,675.3 628.1,675.3 656.2,661.2 677.3,680.5 693.1,691.1 712.4,682.3 716,663 720,650.7 728.5,618.8 714.5,603 702.2,585.4 693.4,571.4 703.9,566.1 705.7,557.3" fill="none" stroke="#f6e3a0" stroke-width="3.6" stroke-linejoin="round" stroke-linecap="round"/>
<polyline points="575.4,673.5 593,659.5 603.5,650.7 608.8,663 608.8,675.3" fill="none" stroke="#f6e3a0" stroke-width="3.6" stroke-linejoin="round" stroke-linecap="round"/>
<polyline points="682.8,501 730.3,531 718,536.2 695.1,543.2 682.8,550.3 681,555.5" fill="none" stroke="#f6e3a0" stroke-width="3.6" stroke-linejoin="round" stroke-linecap="round"/>
<polyline points="678.9,497.3 670.5,502.8 665.3,511.6 674,523.9 682.8,529.2" fill="none" stroke="#f6e3a0" stroke-width="3.6" stroke-linejoin="round" stroke-linecap="round"/>
<polyline points="684.6,557.3 672.3,555.5 660,562.6" fill="none" stroke="#f6e3a0" stroke-width="3.6" stroke-linejoin="round" stroke-linecap="round"/>
<polyline points="809.3,521.3 821.6,526.6 844.5,520.4 870.8,502.8 877.8,494" fill="none" stroke="#f6e3a0" stroke-width="3.6" stroke-linejoin="round" stroke-linecap="round"/>
<polyline points="446,590 472.3,542.4 488.1,519.6 505,500.3 512,480 540,455 562,440 600,425" fill="none" stroke="#f6e3a0" stroke-width="3.6" stroke-linejoin="round" stroke-linecap="round"/>
<polyline points="327,701 403.3,628 446,590" fill="none" stroke="#f6e3a0" stroke-width="3.6" stroke-linejoin="round" stroke-linecap="round"/>
<polyline points="453,565.3 475.8,540.7 498.7,477.4 505,472.2 520,462" fill="none" stroke="#f6e3a0" stroke-width="3.6" stroke-linejoin="round" stroke-linecap="round"/>
<polyline points="560,462 590,472 610,480 630,488 645,503" fill="none" stroke="#f6e3a0" stroke-width="3.6" stroke-linejoin="round" stroke-linecap="round"/>
<polyline points="622,440 640,452 660,470 679,497" fill="none" stroke="#f6e3a0" stroke-width="3.6" stroke-linejoin="round" stroke-linecap="round"/>
<polyline points="387,656 393,670 398.5,691.6" fill="none" stroke="#f6e3a0" stroke-width="3.6" stroke-linejoin="round" stroke-linecap="round"/>
<polyline points="201,209 203,225 220,227 230,233 248,240 253,239.6 256,250 266,254.4 272,251 270,244 284,238 308,238.4 330,242 338,245 342,242 356,250 374,249.6 377,247 402,252 416,259 420,261 416,266 431,276 434,271 448,273 457,268 464,273 470,270 490,283" fill="none" stroke="#c4c2ba" stroke-width="1.5" stroke-dasharray="1.5 1.5"/>
<polyline points="460.5,269 485,281.4 497.4,290.7 515.9,293.7 528,300 537.4,315.3 528,327.6" fill="none" stroke="#c4c2ba" stroke-width="1.5" stroke-dasharray="1.5 1.5"/>
<polyline points="525,293.7 537.4,295.3 537.4,309 526.6,327.6 535.8,336.8 537.4,364.4" fill="none" stroke="#c4c2ba" stroke-width="1.5" stroke-dasharray="1.5 1.5"/>
<polyline points="580,268 570,278 578,284 580,296 566,306 551.2,312.2 552.7,327.6 540.4,333.7" fill="none" stroke="#c4c2ba" stroke-width="1.5" stroke-dasharray="1.5 1.5"/>
<polyline points="636,284 646,278 680,277 706,278 726,288 750,288 764,294 772,304" fill="none" stroke="#c4c2ba" stroke-width="1.5" stroke-dasharray="1.5 1.5"/>
<polyline points="638,300 636,284" fill="none" stroke="#c4c2ba" stroke-width="1.5" stroke-dasharray="1.5 1.5"/>
<polyline points="608,312 620,300 618,290 624,285" fill="none" stroke="#c4c2ba" stroke-width="1.5" stroke-dasharray="1.5 1.5"/>
<polyline points="170,302 182,306 190,309" fill="none" stroke="#c4c2ba" stroke-width="1.5" stroke-dasharray="1.5 1.5"/>
<polyline points="570,306 586.6,327.6 580.4,339.8 595.8,333.7 611,312.2 623.4,284.5" fill="none" stroke="#c4c2ba" stroke-width="1.5" stroke-dasharray="1.5 1.5"/>
<polyline points="448.2,293 466.7,296.8 472.8,312.2 474.4,352 482,370.6 500.5,384.4 512.8,383 537.4,364.4 549.7,361.4 586.6,358.3 600,352" fill="none" stroke="#c4c2ba" stroke-width="1.5" stroke-dasharray="1.5 1.5"/>
<polyline points="449.8,429.6 452.5,436.2 451.1,460" fill="none" stroke="#c4c2ba" stroke-width="1.5" stroke-dasharray="1.5 1.5"/>
<polyline points="485.4,367.7 476.2,373 467,388.7 465.6,399.3 460.4,424.3" fill="none" stroke="#c4c2ba" stroke-width="1.5" stroke-dasharray="1.5 1.5"/>
<polyline points="465.6,399.3 476.2,424.3 498.6,440.1" fill="none" stroke="#c4c2ba" stroke-width="1.5" stroke-dasharray="1.5 1.5"/>
<polyline points="452.5,398 464.3,400.6" fill="none" stroke="#c4c2ba" stroke-width="1.5" stroke-dasharray="1.5 1.5"/>
<polyline points="477.5,424.3 484,413.8" fill="none" stroke="#c4c2ba" stroke-width="1.5" stroke-dasharray="1.5 1.5"/>
<polyline points="760,224.5 772.3,229.4 777.3,239.3 798.7,245 807.7,251.7 823.4,254 821.7,269 816.8,275.5 808.6,278 811,283 839.8,290.4 839,293.6 807.7,297 774,306 760,305.2" fill="none" stroke="#c4c2ba" stroke-width="1.5" stroke-dasharray="1.5 1.5"/>
<polyline points="732,209 753.7,213.8 760,224.5" fill="none" stroke="#c4c2ba" stroke-width="1.5" stroke-dasharray="1.5 1.5"/>
<polyline points="600,325.4 608,313 621.4,313 641,302.3 654.3,315.5 656,327 664.2,320.5 663.4,312.2 670.8,313 685.6,308.1 705.3,311.4 725.1,308.1 726.7,299 772.8,306.5 805.8,296.6 840,293.3" fill="none" stroke="#c4c2ba" stroke-width="1.5" stroke-dasharray="1.5 1.5"/>
<polyline points="636.2,290 641.2,302.3 656,319.6" fill="none" stroke="#c4c2ba" stroke-width="1.5" stroke-dasharray="1.5 1.5"/>
<polyline points="618,290 613.2,306.5 609.9,313 619.8,332.8 613.2,359 639.5,375.6 634.6,405.2 616.5,416.7" fill="none" stroke="#c4c2ba" stroke-width="1.5" stroke-dasharray="1.5 1.5"/>
<polyline points="613.2,352.6 621.4,354.2 669.1,346.8 682.3,354.2 697.1,372.3 696.3,392 685.6,425 684.8,440" fill="none" stroke="#c4c2ba" stroke-width="1.5" stroke-dasharray="1.5 1.5"/>
<polyline points="649.4,352.6 649.4,362.4 652.7,364" fill="none" stroke="#c4c2ba" stroke-width="1.5" stroke-dasharray="1.5 1.5"/>
<polyline points="268.4,338.3 319,364.4 362,380 405,401 436,418 451,426 494,426 530,437 565,438 600,423.3 647.7,418.4 685.6,425 731.7,438.2 749.8,444.7 828.8,469.4 878.1,482.6 911,507.2" fill="none" stroke="#c4c2ba" stroke-width="1.5" stroke-dasharray="1.5 1.5"/>
<polyline points="697.1,393.7 708.6,378 715.2,378.9 730,388.8 728.4,402 740,413.5 731.7,438.2" fill="none" stroke="#c4c2ba" stroke-width="1.5" stroke-dasharray="1.5 1.5"/>
<polyline points="710.3,377.2 712,370.7 726.7,374" fill="none" stroke="#c4c2ba" stroke-width="1.5" stroke-dasharray="1.5 1.5"/>
<polyline points="775.3,365.7 772.8,393.7 776.1,402 771.2,411.8 764.6,408.5" fill="none" stroke="#c4c2ba" stroke-width="1.5" stroke-dasharray="1.5 1.5"/>
<polyline points="771.2,411.8 781,425" fill="none" stroke="#c4c2ba" stroke-width="1.5" stroke-dasharray="1.5 1.5"/>
<polyline points="768,420 758,430 756.4,440 752,455" fill="none" stroke="#c4c2ba" stroke-width="1.5" stroke-dasharray="1.5 1.5"/>
<polyline points="786,392.9 791,411.8 814,426.6 833.7,434.9" fill="none" stroke="#c4c2ba" stroke-width="1.5" stroke-dasharray="1.5 1.5"/>
<polyline points="819,371.5 815.6,362.4 830.5,353.4 850,350 880,354 910,370 925,390 930,430 925,480 921,500" fill="none" stroke="#c4c2ba" stroke-width="1.5" stroke-dasharray="1.5 1.5"/>
<polyline points="921,420 894.6,457.9 881.4,462.8 879.8,476" fill="none" stroke="#c4c2ba" stroke-width="1.5" stroke-dasharray="1.5 1.5"/>
<polyline points="864,341.4 865.7,350.7" fill="none" stroke="#c4c2ba" stroke-width="1.5" stroke-dasharray="1.5 1.5"/>
<polyline points="881.4,370 898.6,375 900.7,369.3 923.6,360.7" fill="none" stroke="#c4c2ba" stroke-width="1.5" stroke-dasharray="1.5 1.5"/>
<polyline points="881.4,376.4 890,391.4 892.9,400 904.3,405.7 904.3,412.9 897,420" fill="none" stroke="#c4c2ba" stroke-width="1.5" stroke-dasharray="1.5 1.5"/>
<polyline points="879.8,420 879,400 876.5,456.2 870,459.5" fill="none" stroke="#c4c2ba" stroke-width="1.5" stroke-dasharray="1.5 1.5"/>
<polyline points="802.4,420 828.8,436.5 874.9,461.2 894.6,457.9" fill="none" stroke="#c4c2ba" stroke-width="1.5" stroke-dasharray="1.5 1.5"/>
<polyline points="921.8,512.2 911,532 901.2,551.7 899.5,570 890,590 880,607 842,660 820,692 804,691 790,694 772,700" fill="none" stroke="#c4c2ba" stroke-width="1.5" stroke-dasharray="1.5 1.5"/>
<polyline points="896.3,457.9 902.8,480.9 919.3,487.5" fill="none" stroke="#c4c2ba" stroke-width="1.5" stroke-dasharray="1.5 1.5"/>
<polyline points="749.8,444.7 769.5,469.4 792.6,472.7" fill="none" stroke="#c4c2ba" stroke-width="1.5" stroke-dasharray="1.5 1.5"/>
<polyline points="758,425 751.4,444.7" fill="none" stroke="#c4c2ba" stroke-width="1.5" stroke-dasharray="1.5 1.5"/>
<polyline points="268.5,546.8 300.1,544.2 352.8,531 405.5,516.1 414.3,505.5 428.4,491.5 440.7,490.6 458.3,491.5 472.3,482.7 505,470.4" fill="none" stroke="#c4c2ba" stroke-width="1.5" stroke-dasharray="1.5 1.5"/>
<polyline points="451.2,430 451.2,452.8 460,468.7 474,481 496.9,505.5 505,510.8" fill="none" stroke="#c4c2ba" stroke-width="1.5" stroke-dasharray="1.5 1.5"/>
<polyline points="475.8,482.7 489.9,484.5 505,488" fill="none" stroke="#c4c2ba" stroke-width="1.5" stroke-dasharray="1.5 1.5"/>
<polyline points="470.6,505.5 475.8,488 477.6,495.9" fill="none" stroke="#c4c2ba" stroke-width="1.5" stroke-dasharray="1.5 1.5"/>
<polyline points="482.8,546 489.9,549.5 496.9,561.8 498.1,576.9 492.8,615.5 484,636.6 491,654.2 496.4,647.2 501.6,620.8 510.4,615.5 522.7,617.3 529.7,629.6 549,631.4 579,634.9 593,641.9 603.5,650.7" fill="none" stroke="#c4c2ba" stroke-width="1.5" stroke-dasharray="1.5 1.5"/>
<polyline points="498.1,576.9 506.9,582.2 512.2,591 528,589.2 532.4,596.2 521,610.3 528,617.3 529.7,629.6" fill="none" stroke="#c4c2ba" stroke-width="1.5" stroke-dasharray="1.5 1.5"/>
<polyline points="605.3,634.9 640.4,591 647.4,569.9 668.5,555.8 683.5,562" fill="none" stroke="#c4c2ba" stroke-width="1.5" stroke-dasharray="1.5 1.5"/>
<polyline points="617.6,569.9 624.6,578.7 640.4,589.2" fill="none" stroke="#c4c2ba" stroke-width="1.5" stroke-dasharray="1.5 1.5"/>
<polyline points="631.6,571.6 647.4,568.1" fill="none" stroke="#c4c2ba" stroke-width="1.5" stroke-dasharray="1.5 1.5"/>
<polyline points="593,670 607,675.3 628.1,675.3 656.2,661.2 677.3,680.5 693.1,691.1 712.4,682.3 716,663 720,650.7 728.5,618.8 714.5,603 702.2,585.4 693.4,571.4 703.9,566.1 705.7,557.3" fill="none" stroke="#c4c2ba" stroke-width="1.5" stroke-dasharray="1.5 1.5"/>
<polyline points="575.4,673.5 593,659.5 603.5,650.7 608.8,663 608.8,675.3" fill="none" stroke="#c4c2ba" stroke-width="1.5" stroke-dasharray="1.5 1.5"/>
<polyline points="682.8,501 730.3,531 718,536.2 695.1,543.2 682.8,550.3 681,555.5" fill="none" stroke="#c4c2ba" stroke-width="1.5" stroke-dasharray="1.5 1.5"/>
<polyline points="678.9,497.3 670.5,502.8 665.3,511.6 674,523.9 682.8,529.2" fill="none" stroke="#c4c2ba" stroke-width="1.5" stroke-dasharray="1.5 1.5"/>
<polyline points="684.6,557.3 672.3,555.5 660,562.6" fill="none" stroke="#c4c2ba" stroke-width="1.5" stroke-dasharray="1.5 1.5"/>
<polyline points="809.3,521.3 821.6,526.6 844.5,520.4 870.8,502.8 877.8,494" fill="none" stroke="#c4c2ba" stroke-width="1.5" stroke-dasharray="1.5 1.5"/>
<polyline points="446,590 472.3,542.4 488.1,519.6 505,500.3 512,480 540,455 562,440 600,425" fill="none" stroke="#c4c2ba" stroke-width="1.5" stroke-dasharray="1.5 1.5"/>
<polyline points="327,701 403.3,628 446,590" fill="none" stroke="#c4c2ba" stroke-width="1.5" stroke-dasharray="1.5 1.5"/>
<polyline points="453,565.3 475.8,540.7 498.7,477.4 505,472.2 520,462" fill="none" stroke="#c4c2ba" stroke-width="1.5" stroke-dasharray="1.5 1.5"/>
<polyline points="560,462 590,472 610,480 630,488 645,503" fill="none" stroke="#c4c2ba" stroke-width="1.5" stroke-dasharray="1.5 1.5"/>
<polyline points="622,440 640,452 660,470 679,497" fill="none" stroke="#c4c2ba" stroke-width="1.5" stroke-dasharray="1.5 1.5"/>
<polyline points="387,656 393,670 398.5,691.6" fill="none" stroke="#c4c2ba" stroke-width="1.5" stroke-dasharray="1.5 1.5"/>
<polygon points="532.4,460.3 547.2,455.4 586.7,457 591.6,470.2 585,476.8 573.5,473.5 575,490 568,503 560,520 550,527 540,525 527,522 535,510 528,500 530.7,483.4" fill="url(#rp)"/><polygon points="548,468 566,466 570,495 558,503 549,496" fill="#dde9ee"/><polygon points="894,520 905,516 918,514 922,522 915,532 898,530" fill="url(#rp)"/>
<path d="M744.9,333.8 C747.6,336.8 747.9,340.7 744.9,340.7 C742.1999999999999,340.7 743.1,337.09999999999997 744.9,333.8Z" fill="url(#wp)" stroke="#1b2a9a" stroke-width="0.9"/>
<path d="M679.5,406.1 C682.2,409.1 682.5,413 679.5,413 C676.8,413 677.7,409.4 679.5,406.1Z" fill="url(#wp)" stroke="#1b2a9a" stroke-width="0.9"/>
<path d="M764,413.8 C767.6,417.8 768,423 764,423 C760.4,423 761.6,418.2 764,413.8Z" fill="url(#wp)" stroke="#1b2a9a" stroke-width="0.9"/>
<path d="M872,362.9 C878.3,369.9 879,379 872,379 C865.7,379 867.8,370.6 872,362.9Z" fill="url(#wp)" stroke="#1b2a9a" stroke-width="0.9"/>
<path d="M829,398.75 C831.25,401.25 831.5,404.5 829,404.5 C826.75,404.5 827.5,401.5 829,398.75Z" fill="url(#wp)" stroke="#1b2a9a" stroke-width="0.9"/>
<path d="M833,409.1 C835.7,412.1 836,416 833,416 C830.3,416 831.2,412.4 833,409.1Z" fill="url(#wp)" stroke="#1b2a9a" stroke-width="0.9"/>
<path d="M835,429.1 C837.7,432.1 838,436 835,436 C832.3,436 833.2,432.4 835,429.1Z" fill="url(#wp)" stroke="#1b2a9a" stroke-width="0.9"/>
<path d="M670,346.05 C671.35,347.55 671.5,349.5 670,349.5 C668.65,349.5 669.1,347.7 670,346.05Z" fill="url(#wp)" stroke="#1b2a9a" stroke-width="0.9"/>
<path d="M672,351.4 C673.8,353.4 674,356 672,356 C670.2,356 670.8,353.6 672,351.4Z" fill="url(#wp)" stroke="#1b2a9a" stroke-width="0.9"/>
<path d="M623,362.4 C624.8,364.4 625,367 623,367 C621.2,367 621.8,364.6 623,362.4Z" fill="url(#wp)" stroke="#1b2a9a" stroke-width="0.9"/>
<path d="M908,466.4 C909.8,468.4 910,471 908,471 C906.2,471 906.8,468.6 908,466.4Z" fill="url(#wp)" stroke="#1b2a9a" stroke-width="0.9"/>
<path d="M850,340.1 C852.7,343.1 853,347 850,347 C847.3,347 848.2,343.4 850,340.1Z" fill="url(#wp)" stroke="#1b2a9a" stroke-width="0.9"/>
</g>
<circle cx="546.2" cy="409" r="5" fill="#4f8a4f" stroke="#fff" stroke-width="1.3"/>
<circle cx="559.3" cy="460.9" r="5" fill="#4f8a4f" stroke="#fff" stroke-width="1.3"/>
<circle cx="678.9" cy="497.3" r="5" fill="#4f8a4f" stroke="#fff" stroke-width="1.3"/>
<circle cx="683.6" cy="562.5" r="5" fill="#4f8a4f" stroke="#fff" stroke-width="1.3"/>
<circle cx="603" cy="651" r="5" fill="#4f8a4f" stroke="#fff" stroke-width="1.3"/>
<circle cx="911.4" cy="511.6" r="5" fill="#4f8a4f" stroke="#fff" stroke-width="1.3"/>
</svg>
<div class="a" style="left:184px;top:77px;width:696px;height:545px;overflow:hidden"><div class="ml" style="left:283.0px;top:197.3px;font:italic 17.8px 'Liberation Sans';line-height:17.8px">Swellendam</div><div class="ml" style="left:295.5px;top:251.2px;font:15.5px 'Liberation Sans';line-height:15.5px">Railton</div><div class="ml" style="left:415.0px;top:290.4px;font:13px 'Liberation Sans';line-height:13.0px">Bontebok National Park Entrance Gate</div><div class="ml" style="left:419.8px;top:355.4px;font:13px 'Liberation Sans';line-height:13.0px">Bontebok National Park Reception &amp; Shop</div><div class="ml" style="left:339.0px;top:446.3px;font:11px 'Liberation Sans';line-height:11.0px">Lang Elsies Kraal Rest Camp</div><div class="ml" style="left:648px;top:300.5px;font:italic 18px 'Liberation Sans';line-height:18px">Buffeljagsrivier</div></div><div class="a" style="left:356px;top:17px;font:italic 40px 'Liberation Sans';line-height:40px;white-space:nowrap">Swellendam</div><div class="a" style="left:26.3px;top:201.8px;font-size:17.5px;line-height:21px;white-space:nowrap;">Legend</div>
<div class="a" style="left:32.8px;top:234.60000000000002px;width:8px;height:8px;border-radius:50%;background:#4f8a4f"></div>
<div class="a" style="left:55.0px;top:232.0px;font-size:13px;line-height:16px;white-space:nowrap;">places</div>
<div class="a" style="left:26.3px;top:256.1px;font-size:13px;line-height:16px;white-space:nowrap;">buildings</div>
<div class="a" style="left:26px;top:279px;width:21px;height:12px;background:#d7191c;border:1px solid #3a3a3a"></div>
<div class="a" style="left:55.0px;top:278.5px;font-size:13px;line-height:16px;white-space:nowrap;">church</div>
<div class="a" style="left:26px;top:298px;width:21px;height:12px;background:#e8603c;border:1px solid #3a3a3a"></div>
<div class="a" style="left:55.0px;top:297.5px;font-size:13px;line-height:16px;white-space:nowrap;">commercial</div>
<div class="a" style="left:26px;top:317px;width:21px;height:12px;background:#fdae61;border:1px solid #3a3a3a"></div>
<div class="a" style="left:55.0px;top:316.5px;font-size:13px;line-height:16px;white-space:nowrap;">garage</div>
<div class="a" style="left:26px;top:336px;width:21px;height:12px;background:#fed690;border:1px solid #3a3a3a"></div>
<div class="a" style="left:55.0px;top:335.5px;font-size:13px;line-height:16px;white-space:nowrap;">hangar</div>
<div class="a" style="left:26px;top:355px;width:21px;height:12px;background:#ffffc0;border:1px solid #3a3a3a"></div>
<div class="a" style="left:55.0px;top:354.5px;font-size:13px;line-height:16px;white-space:nowrap;">house</div>
<div class="a" style="left:26px;top:374px;width:21px;height:12px;background:#d9efb0;border:1px solid #3a3a3a"></div>
<div class="a" style="left:55.0px;top:373.5px;font-size:13px;line-height:16px;white-space:nowrap;">retail</div>
<div class="a" style="left:26px;top:393px;width:21px;height:12px;background:#abdda4;border:1px solid #3a3a3a"></div>
<div class="a" style="left:55.0px;top:392.5px;font-size:13px;line-height:16px;white-space:nowrap;">telephone_exchange</div>
<div class="a" style="left:26px;top:412px;width:21px;height:12px;background:#5fa9a2;border:1px solid #3a3a3a"></div>
<div class="a" style="left:55.0px;top:411.5px;font-size:13px;line-height:16px;white-space:nowrap;">yes</div>
<div class="a" style="left:26px;top:431px;width:21px;height:12px;background:#2b83ba;border:1px solid #3a3a3a"></div>
<div class="a" style="left:25px;top:454.5px;width:24px;height:3px;background:#f4dc90"></div>
<div class="a" style="left:26px;top:455.29999999999995px;width:22px;height:1.3px;background:repeating-linear-gradient(90deg,#b9b5a8 0 1.3px,transparent 1.3px 2.7px)"></div>
<div class="a" style="left:55.0px;top:449.5px;font-size:13px;line-height:16px;white-space:nowrap;">roads</div>
<div class="a" style="left:26px;top:475px;width:21px;height:12px;border:1px solid #1b2a9a;background:repeating-linear-gradient(90deg,#3f6ef0 0 1px,transparent 1px 3px),repeating-linear-gradient(0deg,#3f6ef0 0 1px,#8fb0ff 1px 3px)"></div>
<div class="a" style="left:55.0px;top:474.3px;font-size:13px;line-height:16px;white-space:nowrap;">water</div>
<div class="a" style="left:26px;top:506px;width:22px;height:1.2px;background:#9fc7f3"></div>
<div class="a" style="left:55.0px;top:499.0px;font-size:13px;line-height:16px;white-space:nowrap;">rivers</div>
<div class="a" style="left:26.3px;top:524.2px;font-size:13px;line-height:16px;white-space:nowrap;">landuse</div>
<div class="a" style="left:26px;top:547px;width:21px;height:11px;background:#dcf6c8"></div>
<div class="a" style="left:26px;top:566px;width:21px;height:11px;background:#8fc0b4"></div>
<div class="a" style="left:26px;top:585px;width:21px;height:11px;background:#e1ecf0"></div>
<div class="a" style="left:26px;top:604px;width:21px;height:11px;background:#84b46f"></div></div>
<div class="a" id="vs"><div class="a thumbv"></div></div>
<div class="a" id="hs"><div class="a thumbh"></div></div>
<div class="a" id="corner"></div>
<div class="a" style="left:613px;top:93px;width:1px;height:20px;background:#e00"></div>
<div class="a" style="left:64px;top:363px;width:20px;height:1px;background:#e00"></div>
<div class="a btn" style="left:63px;top:804px;width:56px;height:21px;line-height:17px">Help</div>
<div class="a btn" style="left:968px;top:804px;width:63px;height:21px;line-height:17px">Close</div>
<div class="a" id="divl"></div>
<div class="a" style="left:1039px;top:93px;width:403px;height:739px;background:#ececec"></div>
<div class="dtitle" style="top:93px;height:27px;line-height:25px">Command history</div>
<div class="close" style="left:1042px;top:98px"></div>
<div class="a" style="left:1040px;top:120px;width:402px;height:137px;background:#fff;border-bottom:1px solid #c8c8c8"></div>
<div class="a" style="left:1427px;top:120px;width:15px;height:136px;background:linear-gradient(90deg,#eeeeee,#fafafa);border-left:1px solid #e4e4e4"></div>
<div class="a" style="left:1431px;top:210px;width:8px;height:44px;border-radius:4px;background:#c2c2c2"></div>
<div class="ch" style="top:119px">Legend added</div>
<div class="ch" style="top:134px">Change item position</div>
<div class="ch" style="top:149px">Change item position</div>
<div class="ch" style="top:164px">Change item position</div>
<div class="ch" style="top:179px">Change item position</div>
<div class="ch" style="top:194px">Change item position</div>
<div class="ch" style="top:209px">Change item position</div>
<div class="ch" style="top:224px">Change item position</div>
<div class="a" style="left:1040px;top:240px;width:386px;height:15px;background:#3875d7"></div>
<div class="ch" style="top:239px;color:#fff">Change item position</div>
<!-- tabs -->
<div class="a" style="left:1040px;top:267px;width:402px;height:12px;border:1px solid #bdbdbd;border-bottom:none;border-radius:5px 5px 0 0;background:linear-gradient(#e6e6e6,#dedede)"></div>
<div class="a btn" style="left:1079px;top:258px;width:94px;height:21px;border-radius:4px 0 0 4px;line-height:17px">Composition</div>
<div class="a" style="left:1172px;top:258px;width:115px;height:21px;background:linear-gradient(#9a9a9a,#838383);border:1px solid #7a7a7a;color:#fff;text-align:center;font-size:13px;line-height:17px">Item Properties</div>
<div class="a btn" style="left:1286px;top:258px;width:117px;height:21px;border-radius:0 4px 4px 0;line-height:17px">Atlas generation</div>
<div class="dtitle" style="top:279px;height:24px;line-height:23px;border-top:1px solid #d4d4d4">Item Properties</div>
<div class="close" style="left:1042px;top:284px"></div>
<div class="a" style="left:1039px;top:303px;width:403px;height:20px;background:#c6c6c6;border-bottom:1px solid #a9a9a9"></div>
<div class="lbl" style="left:1044px;top:304px;font-weight:bold;line-height:17px">Legend</div>
<div class="a" style="left:1040px;top:323px;width:402px;height:509px;border-left:1px solid #cfcfcf"></div>
<div class="a" style="left:1427px;top:323px;width:15px;height:509px;background:linear-gradient(90deg,#ececec,#f6f6f6);border-left:1px solid #dedede"></div>
<div class="a" style="left:1430px;top:324px;width:8px;height:321px;border-radius:4px;background:#c2c2c2"></div>
<div class="a" style="left:1040px;top:826px;width:386px;height:6px;overflow:hidden"><div class="lbl" style="left:33px;top:2px">Colors</div></div>
<svg class="a" style="left:1430px;top:820px" width="12" height="12"><path d="M11,3L3,11M11,7L7,11" stroke="#9a9a9a" stroke-width="1"/><path d="M11,4L4,11M11,8L8,11" stroke="#fff" stroke-width="0.8"/></svg>
<div class="tri" style="left:1053px;top:336px"></div>
<div class="lbl" style="left:1073px;top:330px">Main properties</div>
<div class="a" style="left:1051px;top:350px;width:363px;height:97px;border:1px solid #c9c9c9;border-radius:5px;background:#e3e3e3"></div>
<div class="lbl" style="left:1063px;top:364px">Title</div>
<div class="inp" style="left:1143px;top:362px;width:260px;height:21px;padding-left:3px">Legend</div>
<div class="lbl" style="left:1063px;top:390px">Map</div>
<div class="a btn" style="left:1142px;top:390px;width:261px;height:21px;text-align:left;padding-left:8px;line-height:15px;border-radius:4px">Map 0</div>
<div class="a" style="left:1389px;top:394px;font-size:8px;line-height:6px;color:#333">&#9650;<br>&#9660;</div>
<div class="lbl" style="left:1063px;top:417px">Wrap text on</div>
<div class="inp" style="left:1143px;top:415px;width:260px;height:21px"></div>
<div class="tri" style="left:1053px;top:471px"></div>
<div class="lbl" style="left:1073px;top:465px">Legend items</div>
<div class="a" style="left:1051px;top:485px;width:363px;height:297px;border:1px solid #c9c9c9;border-radius:5px;background:#e3e3e3"></div>
<div class="a btn" style="left:1063px;top:497px;width:88px;height:23px;line-height:21px;border-radius:2px">Update item</div>
<div class="a btn" style="left:1157px;top:497px;width:77px;height:23px;line-height:21px;border-radius:2px">Update all</div>
<div class="a" style="left:1063px;top:526px;width:340px;height:192px;background:#fff;border:1px solid #a3a3a3"></div>
<div class="a" style="left:1064px;top:527px;width:338px;height:17px;background:linear-gradient(#fff,#e9e9e9);border-bottom:1px solid #c4c4c4"></div>
<div class="a" style="left:1163px;top:529px;width:1px;height:13px;background:#c8c8c8"></div>
<div class="lbl" style="left:1069px;top:527px;line-height:15px">1</div>
<div class="lbl" style="left:1167px;top:527px;line-height:15px">2</div>
<div class="trir" style="left:1071px;top:545px;border-top-width:4.5px;border-bottom-width:4.5px;border-left-width:8px;border-left-color:#666"></div>
<div class="lbl" style="left:1089px;top:543px;line-height:13px">places</div>
<div class="lbl" style="left:1169px;top:543px;line-height:13px">Hidden</div>
<div class="trir" style="left:1071px;top:558px;border-top-width:4.5px;border-bottom-width:4.5px;border-left-width:8px;border-left-color:#666"></div>
<div class="lbl" style="left:1089px;top:556px;line-height:13px">buildings</div>
<div class="lbl" style="left:1169px;top:556px;line-height:13px">Subgroup</div>
<div class="trir" style="left:1071px;top:571px;border-top-width:4.5px;border-bottom-width:4.5px;border-left-width:8px;border-left-color:#666"></div>
<div class="lbl" style="left:1089px;top:569px;line-height:13px">roads</div>
<div class="lbl" style="left:1169px;top:569px;line-height:13px">Hidden</div>
<div class="trir" style="left:1071px;top:584px;border-top-width:4.5px;border-bottom-width:4.5px;border-left-width:8px;border-left-color:#666"></div>
<div class="lbl" style="left:1089px;top:582px;line-height:13px">water</div>
<div class="lbl" style="left:1169px;top:582px;line-height:13px">Hidden</div>
<div class="trir" style="left:1071px;top:597px;border-top-width:4.5px;border-bottom-width:4.5px;border-left-width:8px;border-left-color:#666"></div>
<div class="lbl" style="left:1089px;top:595px;line-height:13px">rivers</div>
<div class="lbl" style="left:1169px;top:595px;line-height:13px">Hidden</div>
<div class="trir" style="left:1071px;top:610px;border-top-width:4.5px;border-bottom-width:4.5px;border-left-width:8px;border-left-color:#666"></div>
<div class="lbl" style="left:1089px;top:608px;line-height:13px">landuse</div>
<div class="lbl" style="left:1169px;top:608px;line-height:13px">Subgroup</div>
<div class="a btn" style="left:1063px;top:724px;width:30px;height:30px;border-radius:1px;border-color:#9a9a9a"></div>
<div class="a btn" style="left:1096px;top:724px;width:30px;height:30px;border-radius:1px;border-color:#9a9a9a"></div>
<div class="a btn" style="left:1129px;top:726px;width:26px;height:26px;border-radius:1px;border-color:#9a9a9a"></div>
<div class="a btn" style="left:1158px;top:724px;width:30px;height:30px;border-radius:1px;border-color:#9a9a9a"></div>
<div class="a btn" style="left:1191px;top:724px;width:30px;height:30px;border-radius:1px;border-color:#9a9a9a"></div>
<div class="a btn" style="left:1224px;top:724px;width:30px;height:30px;border-radius:1px;border-color:#9a9a9a"></div>
<div class="a btn" style="left:1257px;top:724px;width:30px;height:30px;border-radius:1px;border-color:#c8c8c8;background:#e8e8e8"></div>
<svg class="a" style="left:1050px;top:715px" width="250" height="70" viewBox="1050 715 250 70">
<defs><linearGradient id="tb1" x1="0" y1="0" x2="0" y2="1"><stop offset="0" stop-color="#8cc4ff"/><stop offset="1" stop-color="#1f6fe0"/></linearGradient></defs>
<path d="M1068.5,733.5h19c1,0 1.2,1 0.6,1.6l-8.4,9.4c-0.6,0.7 -1.6,0.7 -2.2,0l-9.6,-9.4c-0.6,-0.6 -0.4,-1.6 0.6,-1.6z" fill="url(#tb1)" stroke="#1f56b0" stroke-width="0.8"/>
<path d="M1101.5,744.5h19c1,0 1.2,-1 0.6,-1.6l-8.4,-9.4c-0.6,-0.7 -1.6,-0.7 -2.2,0l-9.6,9.4c-0.6,0.6 -0.4,1.6 0.6,1.6z" fill="url(#tb1)" stroke="#1f56b0" stroke-width="0.8"/>
<path d="M1135,734h5v-2h5v2h3v12h-13z" fill="#d8d8d8" stroke="#a5a5a5" stroke-width="0.8"/><circle cx="1146.5" cy="744" r="3.3" fill="#5aa55a" stroke="#fff" stroke-width="0.6"/><path d="M1146.5,742v4M1144.5,744h4" stroke="#fff" stroke-width="1"/>
<path d="M1169.5,730.5h7v5h5v6h-5v5h-7v-5h-5v-6h5z" fill="#1a9a2a" stroke="#0f6f1a" stroke-width="0.8"/><path d="M1169.5,730.5h7v5h5v6h-5v5h-7v-5h-5v-6h5z" fill="none" stroke="#c9efc9" stroke-width="0.6" transform="translate(0,0)"/>
<rect x="1197.5" y="734" width="17.5" height="10" rx="3" fill="#c41010" stroke="#8f1010" stroke-width="0.8"/><rect x="1199.5" y="736" width="13.5" height="6" rx="1" fill="none" stroke="#f5caca" stroke-width="0.8"/>
<path d="M1230,731h13v17h-13z" fill="#f6f8fc" stroke="#9aa3b0" stroke-width="0.8"/><path d="M1244,730l3,2l-8,14l-3,1.5l0.3,-3.2z" fill="#f5b428" stroke="#b97a10" stroke-width="0.6"/>
<text x="1271.5" y="746" font-family="Liberation Serif" font-size="19" text-anchor="middle" fill="#c49ad6">&#931;</text>
<rect x="1063.5" y="759.5" width="13.5" height="12.5" rx="2" fill="#dbe3ec" stroke="#555" stroke-width="0.9"/>
<path d="M1066,765.5l3.5,4l6.5,-11" fill="none" stroke="#1f1f1f" stroke-width="2.4"/>
</svg>
<div class="lbl" style="left:1082px;top:756px">Auto Update</div>
<div class="trir" style="left:1056px;top:803px;border-top-width:6px;border-bottom-width:6px"></div>
<div class="lbl" style="left:1073px;top:800px">Fonts</div>

</body></html>
